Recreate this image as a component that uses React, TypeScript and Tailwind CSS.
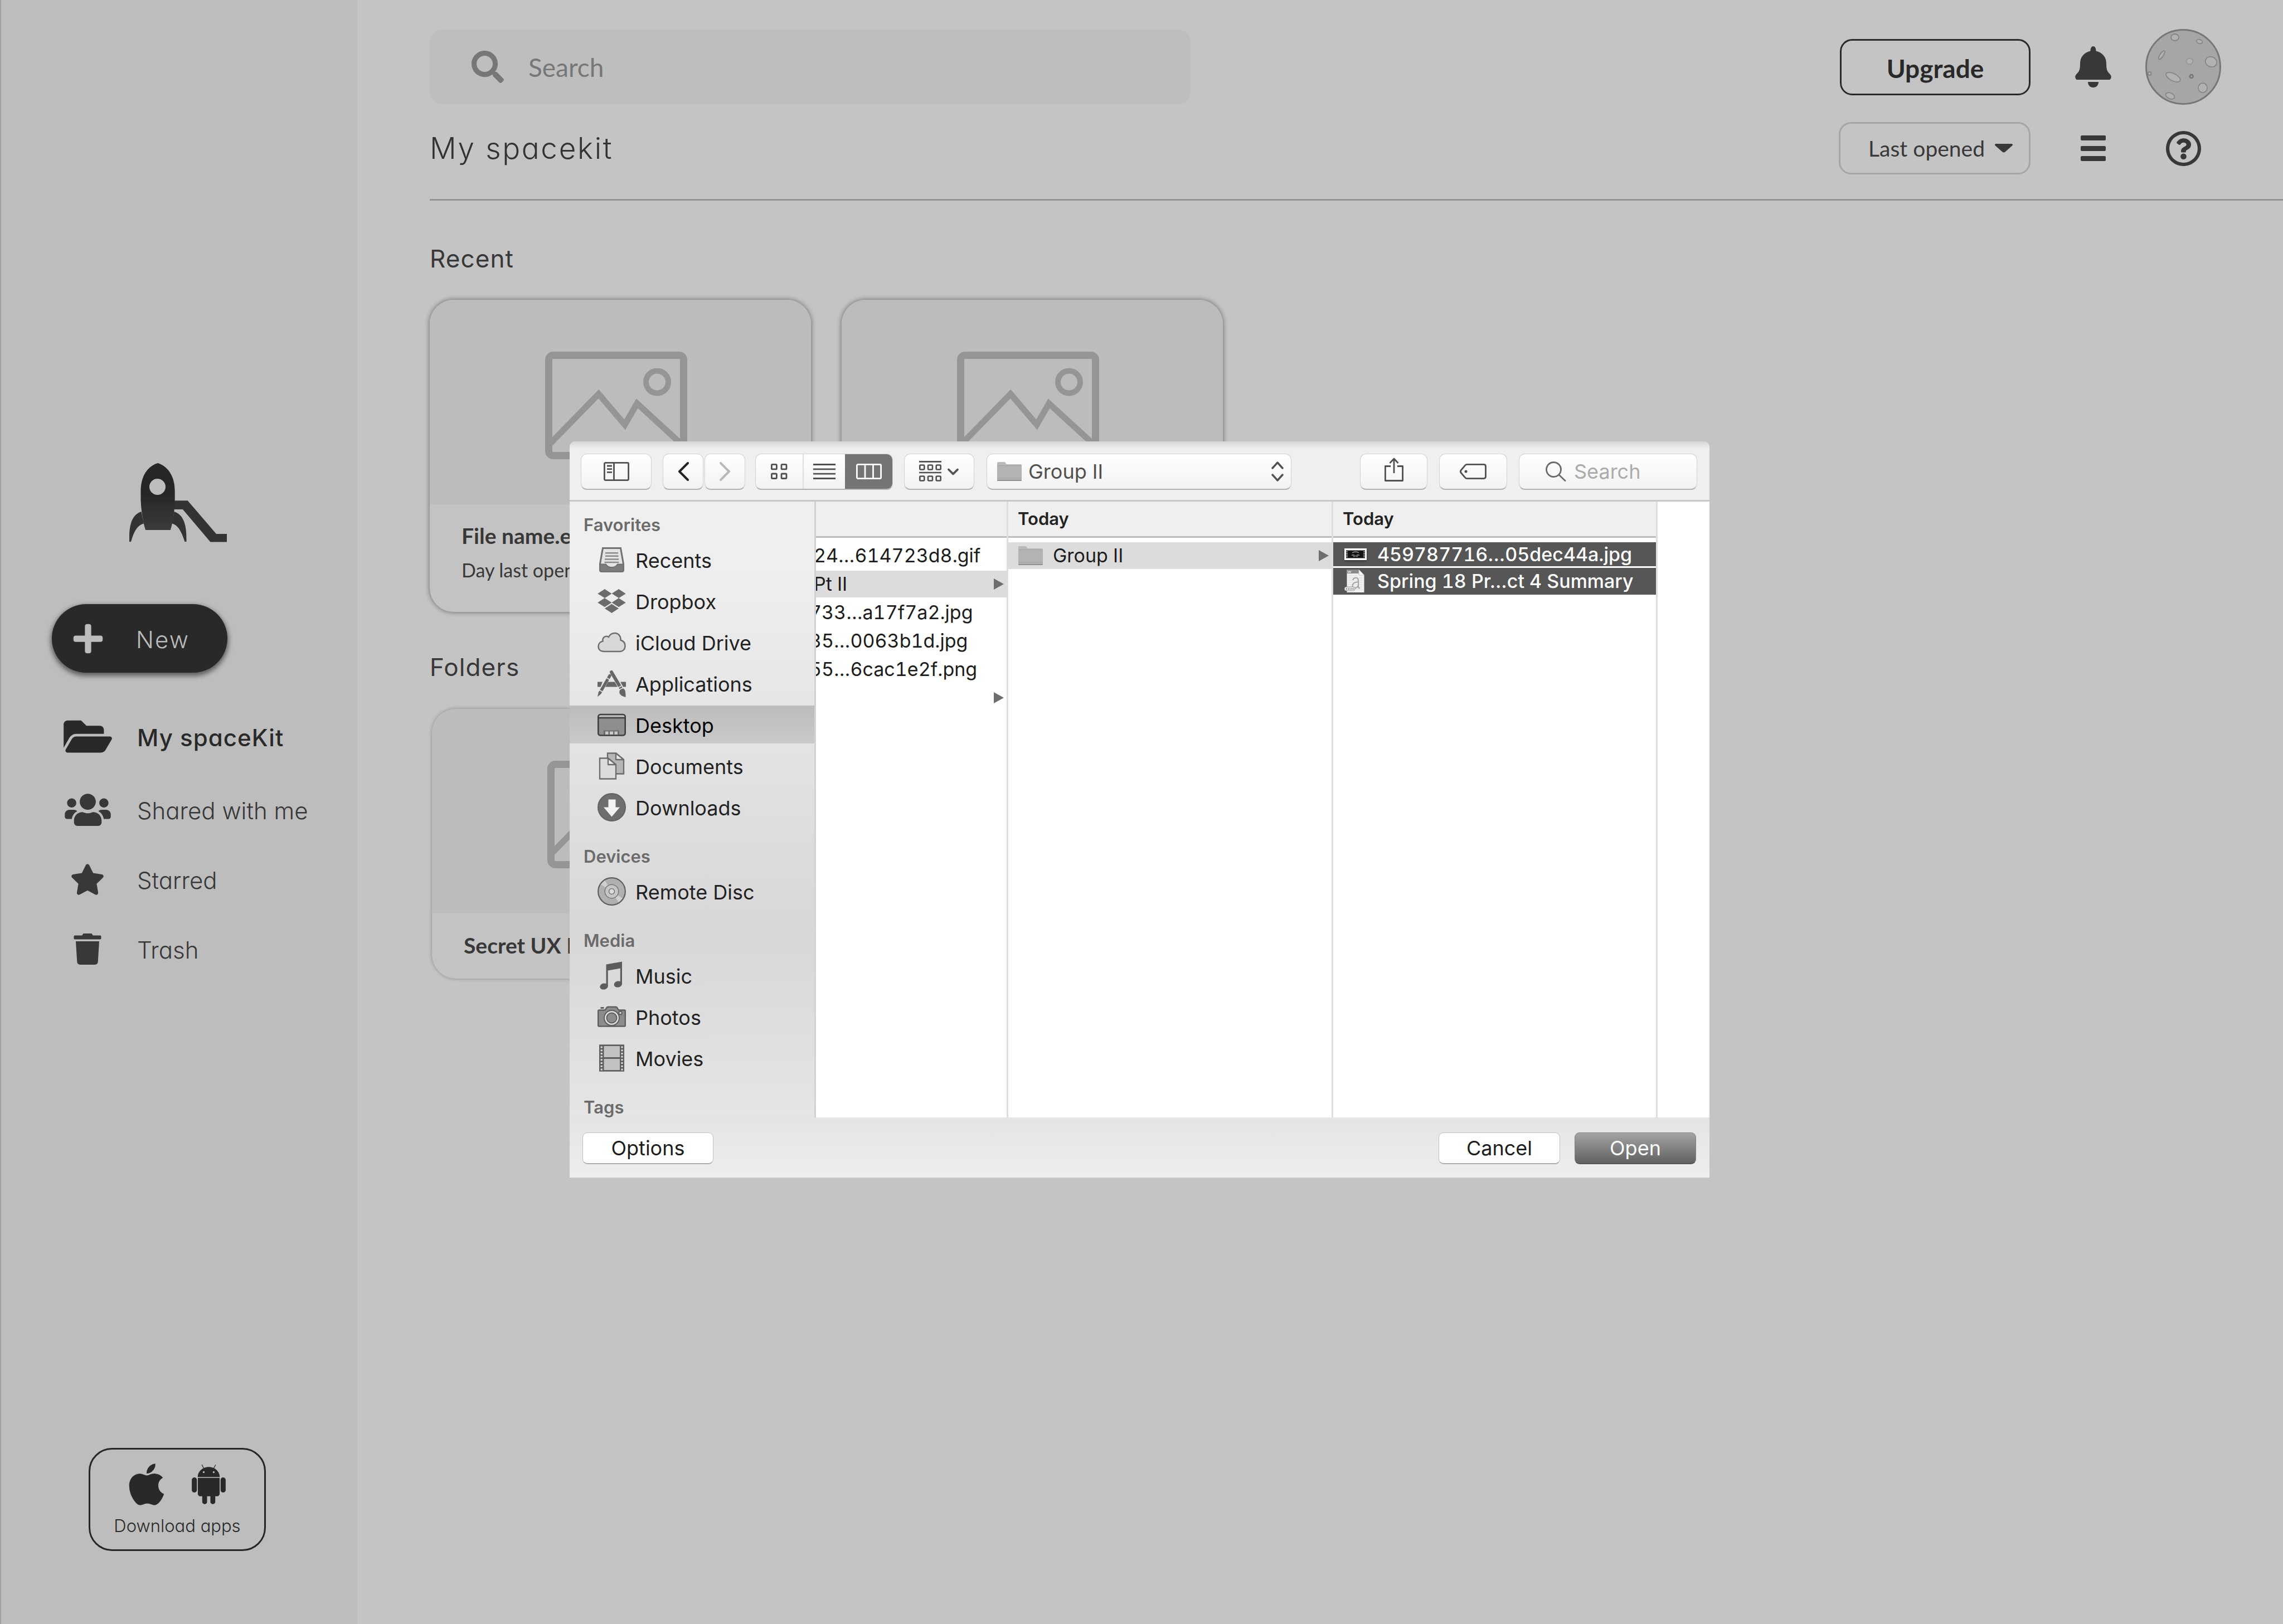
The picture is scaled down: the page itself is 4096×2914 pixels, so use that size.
import React from 'react';
import { FaApple, FaDropbox, FaFolderOpen, FaPlus, FaRegQuestionCircle, FaSearch, FaStar, FaTrash, FaUsers } from 'react-icons/fa';

/* ---------- Page icons ---------- */

function RocketLogo() {
  return (
    <svg viewBox="0 0 175 142" className="h-[142px] w-[175px]" role="img" aria-label="spaceKit">
      <defs>
        <linearGradient id="rocket" x1="0" y1="0" x2="0" y2="1">
          <stop offset="0.45" stopColor="#262626" />
          <stop offset="1" stopColor="#3b3b3b" />
        </linearGradient>
      </defs>
      <g fill="#333333">
        <path d="M21.5 87C6 92-1 108 0 141h3c5-17 11-30 23-32.500z" />
        <path d="M80.500 87c15.500 5 23 21 22 54h-3c-5.500-17-11.500-30-23-32.500z" />
        <path d="M81 67.300h23.700L156 127h19v14.500h-29.500L95.900 83H81z" />
      </g>
      <path
        fill="url(#rocket)"
        fillRule="evenodd"
        d="M51 0C34 5 20.500 22 20.500 50v16c.5 16 3.500 38 8.500 54h44.800c5.200-16 7.900-38 7.900-54V50C81.700 22 68 5 51 0zm-.5 28a14.500 14.500 0 1 1 0 29 14.500 14.500 0 0 1 0-29z"
      />
    </svg>
  );
}

function AndroidIcon() {
  return (
    <svg viewBox="0 0 448 512" className="h-[81px] w-[71px]" fill="currentColor" aria-hidden="true">
      <path d="M89.600 204.500v115.800c0 15.400-12.100 27.700-27.500 27.700-15.300 0-30.100-12.400-30.100-27.700V204.500c0-15.100 14.800-27.500 30.100-27.500 15.100 0 27.500 12.400 27.500 27.500zm10.800 157c0 16.400 13.200 29.600 29.600 29.600h19.900l.3 61.100c0 36.900 55.200 36.600 55.200 0v-61.100h37.200v61.100c0 36.700 55.500 36.800 55.500 0v-61.100h20.200c16.200 0 29.400-13.200 29.400-29.600V182.100H100.400v179.400zm248-189.100H99.300c0-42.800 25.600-80 63.600-99.400l-19.100-35.300c-2.800-4.900 4.300-8 6.700-3.800l19.400 35.600c34.900-15.500 75-14.700 108.300 0L297.500 34c2.500-4.300 9.500-1.100 6.700 3.800L285.100 73c37.700 19.400 63.300 56.600 63.300 99.400zm-170.700-55.500c0-5.700-4.600-10.500-10.500-10.500-5.700 0-10.200 4.800-10.200 10.500s4.600 10.500 10.200 10.500c5.900 0 10.500-4.800 10.500-10.500zm113.400 0c0-5.700-4.600-10.500-10.200-10.500-5.900 0-10.500 4.800-10.500 10.500s4.600 10.500 10.500 10.500c5.600 0 10.200-4.800 10.200-10.500zm94.800 60.100c-15.100 0-27.500 12.100-27.500 27.500v115.800c0 15.400 12.400 27.700 27.500 27.700 15.400 0 30.100-12.400 30.100-27.700V204.500c0-15.400-14.800-27.500-30.100-27.500z" />
    </svg>
  );
}

function BellIcon() {
  return (
    <svg viewBox="0 0 65 74" className="h-[74px] w-[65px]" fill="#383838" aria-hidden="true">
      <path d="M32.500 0C29.500 0 27.500 3 27.500 8.500 16 11.500 9 19 9 31c0 13-2.500 14.500-6.500 19-3.300 3.500-2.700 7.500 0 10h60c2.700-2.500 3.300-6.500 0-10-4-4.500-6.500-6-6.500-19 0-12-7-19.500-18.500-22.500C37.500 3 35.500 0 32.500 0z" />
      <path d="M23 64h19c0 6-4 10-9.500 10S23 70 23 64z" />
    </svg>
  );
}

function MoonAvatar() {
  return (
    <svg viewBox="0 0 136 136" className="size-[136px]" aria-hidden="true">
      <circle cx="68" cy="68" r="66.500" fill="#a6a6a6" stroke="#777777" strokeWidth="3" />
      <g fill="#b2b2b2" stroke="#858585" strokeWidth="1.800">
        <ellipse cx="53" cy="15" rx="7" ry="6" />
        <ellipse cx="97" cy="22.500" rx="5.500" ry="3.500" transform="rotate(20 97 22.500)" />
        <ellipse cx="29.400" cy="46.700" rx="3" ry="9" transform="rotate(33 29.400 46.700)" />
        <ellipse cx="79.400" cy="58" rx="6" ry="5.500" stroke="#969696" />
        <ellipse cx="118" cy="59" rx="10.500" ry="9" transform="rotate(20 118 59)" />
        <circle cx="7.600" cy="80" r="3" />
        <ellipse cx="50" cy="86.500" rx="14" ry="6.500" transform="rotate(27 50 86.500)" />
        <circle cx="82.700" cy="85" r="3" stroke="#777777" strokeWidth="2.500" fill="#a0a0a0" />
        <ellipse cx="103" cy="105.700" rx="8" ry="8.500" />
        <ellipse cx="44.600" cy="120" rx="8.500" ry="5" transform="rotate(25 44.600 120)" />
      </g>
    </svg>
  );
}

function PicturePlaceholder() {
  return (
    <svg viewBox="0 0 255 193" className="h-[193px] w-[255px]" fill="none" stroke="#959595" aria-hidden="true">
      <rect x="6.500" y="6.500" width="242" height="180" rx="8" strokeWidth="13" />
      <circle cx="201" cy="54.500" r="20" strokeWidth="10" />
      <path d="M8 166l88-90 47 55 22-38 83 76" strokeWidth="11" />
    </svg>
  );
}

/* ---------- Dialog icons ---------- */

function FolderGlyph() {
  return (
    <svg viewBox="0 0 44 36" className="h-[36px] w-[44px] shrink-0" aria-hidden="true">
      <path d="M0 3q0-2 2-2h11q2 0 2.500 2l.8 2H42q2 0 2 2v8H0z" fill="#b9b9b9" />
      <rect x="0" y="7.500" width="44" height="27" rx="1.500" fill="#b3b3b3" />
      <path d="M0 7.500h44M0 30h44" stroke="#a0a0a0" strokeWidth="1" />
      <rect x="0" y="33" width="44" height="2" rx="1" fill="#909090" />
    </svg>
  );
}

function Chevron({ flip, className }: { flip?: boolean; className: string }) {
  return (
    <svg viewBox="0 0 20 34" className={className} fill="none" stroke="currentColor" strokeWidth="4" strokeLinecap="round" strokeLinejoin="round" aria-hidden="true">
      <path d={flip ? 'M2 2l15 15L2 32' : 'M18 2L3 17l15 15'} />
    </svg>
  );
}

function SidebarToggleIcon() {
  return (
    <svg viewBox="0 0 46 34" className="h-[34px] w-[46px]" fill="none" stroke="currentColor" strokeWidth="2.800" aria-hidden="true">
      <rect x="1.400" y="1.400" width="43.200" height="31.200" rx="2" />
      <path d="M18.500 1v32M6 7h9M6 12.700h9M6 18.400h9" />
    </svg>
  );
}

function GridIcon() {
  return (
    <svg viewBox="0 0 30 28" className="h-[28px] w-[30px]" fill="none" stroke="currentColor" strokeWidth="2.800" aria-hidden="true">
      <rect x="1.400" y="1.400" width="9" height="8.500" rx="1.500" />
      <rect x="19" y="1.400" width="9" height="8.500" rx="1.500" />
      <rect x="1.400" y="18" width="9" height="8.500" rx="1.500" />
      <rect x="19" y="18" width="9" height="8.500" rx="1.500" />
    </svg>
  );
}

function ListIcon() {
  return (
    <svg viewBox="0 0 40 28" className="h-[28px] w-[40px]" stroke="currentColor" strokeWidth="2.800" aria-hidden="true">
      <path d="M0 1.500h40M0 9.800h40M0 18.200h40M0 26.500h40" />
    </svg>
  );
}

function ColumnsIcon() {
  return (
    <svg viewBox="0 0 46 28" className="h-[28px] w-[46px]" fill="none" stroke="currentColor" strokeWidth="2.800" aria-hidden="true">
      <rect x="1.400" y="1.400" width="43.200" height="25.200" rx="2" />
      <path d="M16 1v26M30.500 1v26" />
    </svg>
  );
}

function ArrangeIcon() {
  return (
    <svg viewBox="0 0 72 37" className="h-[37px] w-[72px]" fill="none" stroke="currentColor" strokeWidth="2.600" aria-hidden="true">
      <path d="M0 1.400h40M0 21h40" />
      <g>
        <rect x="1.300" y="7.500" width="8" height="8" rx="1.500" />
        <rect x="16" y="7.500" width="8" height="8" rx="1.500" />
        <rect x="30.700" y="7.500" width="8" height="8" rx="1.500" />
        <rect x="1.300" y="27.500" width="8" height="8" rx="1.500" />
        <rect x="16" y="27.500" width="8" height="8" rx="1.500" />
        <rect x="30.700" y="27.500" width="8" height="8" rx="1.500" />
      </g>
      <path d="M53 15.500l8 8 8-8" strokeWidth="3.800" strokeLinecap="round" strokeLinejoin="round" />
    </svg>
  );
}

function UpDownIcon() {
  return (
    <svg viewBox="0 0 22 36" className="pointer-events-none h-[36px] w-[22px]" fill="none" stroke="currentColor" strokeWidth="3.400" strokeLinecap="round" strokeLinejoin="round" aria-hidden="true">
      <path d="M2 12l9-10 9 10M2 24l9 10 9-10" />
    </svg>
  );
}

function ShareIcon() {
  return (
    <svg viewBox="0 0 34 43" className="mb-[6px] h-[43px] w-[34px]" fill="none" stroke="currentColor" strokeWidth="2.800" strokeLinejoin="round" aria-hidden="true">
      <path d="M11 15.500H1.400v26h31.200v-26H23" />
      <path d="M17 28V2M9.500 10L17 2l7.500 8" />
    </svg>
  );
}

function TagIcon() {
  return (
    <svg viewBox="0 0 48 28" className="h-[28px] w-[48px]" fill="none" stroke="currentColor" strokeWidth="2.800" strokeLinejoin="round" aria-hidden="true">
      <path d="M13 1.400h30q3.500 0 3.500 3.500v18.200q0 3.500-3.500 3.500H13q-2 0-3.500-1.800L2 16q-1.200-2 0-4l7.500-8.800Q11 1.400 13 1.400z" />
      <circle cx="11" cy="14" r="2.500" fill="currentColor" stroke="none" />
    </svg>
  );
}

function MagnifierIcon() {
  return (
    <svg viewBox="0 0 37 36" className="h-[36px] w-[37px] shrink-0 text-[#6a6a6a]" fill="none" stroke="currentColor" strokeWidth="2.800" strokeLinecap="round" aria-hidden="true">
      <circle cx="14.500" cy="14.500" r="13" />
      <path d="M24 24l11 10.500" />
    </svg>
  );
}

function DisclosureArrow() {
  return (
    <svg viewBox="0 0 18 20" className="h-[20px] w-[18px] shrink-0" fill="#6e6e6e" aria-hidden="true">
      <path d="M0 0l18 10L0 20z" />
    </svg>
  );
}

function PlaceIcon({ children }: { children: React.ReactNode }) {
  return (
    <svg viewBox="0 0 51 51" className="size-[51px] shrink-0" aria-hidden="true">
      {children}
    </svg>
  );
}

const recentsIcon = (
  <PlaceIcon>
    <path d="M9.500 4.500h32L46.500 33v10.500q0 3-3 3h-36q-3 0-3-3V33z" fill="#e4e4e4" stroke="#707070" strokeWidth="3" />
    <path d="M4.500 33.500H15q3 5.500 10.500 5.500T36 33.500h10.500v10q0 3-3 3h-36q-3 0-3-3z" fill="#7c7c7c" stroke="#707070" strokeWidth="2" />
    <path d="M14 13.200h23M14 18.800h23.500M13 24.400h25M12.500 30h26" stroke="#8a8a8a" strokeWidth="2.500" />
  </PlaceIcon>
);

const cloudIcon = (
  <PlaceIcon>
    <path
      d="M12 42C5 42 1.500 38 1.500 33c0-5 3.500-8.500 8-9.500C8.500 17 14 12.500 20 16c2.500-5 7-7 11-7 6.500 0 11 5.500 10.500 12.500 5 1.500 8 5.500 8 10.500 0 6-4 10-9.500 10z"
      fill="#d8d8d8"
      stroke="#6e6e6e"
      strokeWidth="2.500"
    />
  </PlaceIcon>
);

const applicationsIcon = (
  <PlaceIcon>
    <path d="M0 22.500h9L5.500 31.500H0zM19 22.500h12l5 9H14zM41 22.500h10v9h-5z" fill="#666666" />
    <path d="M22 11.500L5 41" stroke="#666666" strokeWidth="5.500" strokeLinecap="round" />
    <path d="M2 40l5 3.500L0 49.500z" fill="#666666" />
    <path d="M25 5l16.500 28" stroke="#666666" strokeWidth="6" strokeLinecap="round" />
    <path d="M42 34q7-1 8 6 .5 4 .5 10-9-2-11-7-1-5 2.500-9z" fill="#666666" />
    <path d="M16 15l6.500 4M3 37l7 4M37 33l7-4M38.500 37l8-4.500" stroke="#e4e4e4" strokeWidth="1.500" />
  </PlaceIcon>
);

const desktopIcon = (
  <PlaceIcon>
    <rect x="1.300" y="7" width="48.400" height="37.500" rx="4" fill="#8e8e8e" />
    <path d="M1.300 13v-2q0-4 4-4h40.400q4 0 4 4v2z" fill="#bdbdbd" />
    <rect x="1.300" y="7" width="48.400" height="37.500" rx="4" fill="none" stroke="#3e3e3e" strokeWidth="2.600" />
    <path d="M1 13h49" stroke="#3e3e3e" strokeWidth="2.400" />
    <rect x="11" y="35.500" width="28" height="7.500" fill="#6e6e6e" />
    <path d="M14 37.500h5.500V43H14zM22 37.500h6V43h-6zM30.500 37.500H36V43h-5.500z" fill="#c8c8c8" />
  </PlaceIcon>
);

const documentsIcon = (
  <PlaceIcon>
    <path d="M18 2.500h15L47 14v25.500H18z" fill="#b6b6b6" stroke="#6b6b6b" strokeWidth="2.300" />
    <path d="M33 2.500V14h14z" fill="#e6e6e6" stroke="#6b6b6b" strokeWidth="2.300" strokeLinejoin="round" />
    <path d="M4 11.500h15L33 23v25.500H4z" fill="#dcdcdc" stroke="#6b6b6b" strokeWidth="2.300" />
    <path d="M19 11.500V23h14z" fill="#eaeaea" stroke="#6b6b6b" strokeWidth="2.300" strokeLinejoin="round" />
  </PlaceIcon>
);

const downloadsIcon = (
  <PlaceIcon>
    <circle cx="25.500" cy="25.500" r="24.500" fill="#6e6e6e" stroke="#636363" strokeWidth="2" />
    <path d="M19.500 11.500h13v14h7.500L25.500 42.500 11 25.500h8.500z" fill="#f2f2f2" />
  </PlaceIcon>
);

const discIcon = (
  <PlaceIcon>
    <circle cx="25.500" cy="25.500" r="24.500" fill="#b0b0b0" />
    <path d="M25.500 25.500L6 13l7-7.500zM25.500 25.500L45 38l-7 7.500z" fill="#d0d0d0" />
    <circle cx="25.500" cy="25.500" r="24.300" fill="none" stroke="#5e5e5e" strokeWidth="2.200" />
    <circle cx="25.500" cy="25.500" r="12.300" fill="#c6c6c6" stroke="#767676" strokeWidth="1.500" />
    <circle cx="25.500" cy="25.500" r="5" fill="#dadada" stroke="#767676" strokeWidth="1.500" />
  </PlaceIcon>
);

const musicIcon = (
  <PlaceIcon>
    <g fill="#5c5c5c">
      <path d="M15.500 5.500L44 .5v40h-3.200V12.500L18.700 16.500v28h-3.200z" />
      <ellipse cx="11.500" cy="45" rx="7.300" ry="5.500" transform="rotate(-12 11.500 45)" />
      <ellipse cx="36.800" cy="41" rx="7.300" ry="5.500" transform="rotate(-12 36.800 41)" />
    </g>
  </PlaceIcon>
);

const photosIcon = (
  <PlaceIcon>
    <path d="M5.500 8h6v3h-6z" fill="#5e5e5e" />
    <path d="M1.200 15q0-1.500 1.500-1.500H12q2 0 3-2l1-2q1-1.800 3-1.800h13.500q2 0 3 1.800l1 2q1 2 3 2h8.800q1.500 0 1.500 1.500v26q0 1.500-1.500 1.500H2.700q-1.500 0-1.500-1.500z" fill="#8c8c8c" stroke="#5e5e5e" strokeWidth="2.400" />
    <circle cx="25.500" cy="27.500" r="13.500" fill="#dedede" stroke="#5e5e5e" strokeWidth="2" />
    <circle cx="25.500" cy="27.500" r="9" fill="#8c8c8c" stroke="#5e5e5e" strokeWidth="2" />
    <circle cx="41" cy="18.500" r="2.800" fill="#dedede" stroke="#5e5e5e" strokeWidth="2" />
  </PlaceIcon>
);

const moviesIcon = (
  <PlaceIcon>
    <rect x="3" y="1.300" width="45" height="48.400" fill="#5e5e5e" />
    <path d="M11.500 4h28.500v20H11.500zM11.500 27h28.500v20H11.500z" fill="#c2c2c2" />
    <path d="M7.200 4.500v43M44 4.500v43" stroke="#dadada" strokeWidth="3.200" strokeDasharray="3 2.700" />
  </PlaceIcon>
);

const dropboxIcon = <FaDropbox className="h-[49px] w-[51px] shrink-0 text-[#6b6b6b]" aria-hidden="true" />;

/* ---------- Page ---------- */

const geometric = "font-['Inter',sans-serif] [font-feature-settings:'cv11']";

const navItems = [
  { label: 'My spaceKit', icon: <FaFolderOpen className="h-[77px] w-[87px]" />, row: 'mb-[6px] text-[#292929] font-medium tracking-wide' },
  { label: 'Shared with me', icon: <FaUsers className="h-[66px] w-[83px]" />, row: 'text-[#383838] font-light' },
  { label: 'Starred', icon: <FaStar className="h-[56px] w-[62px]" />, row: 'text-[#383838] font-light' },
  { label: 'Trash', icon: <FaTrash className="h-[56px] w-[50px]" />, row: 'text-[#383838] font-light' },
];

function Sidebar() {
  return (
    <aside className="flex w-[641px] shrink-0 flex-col border-l-2 border-[#a0a0a0] bg-[#bdbdbd] pt-[831px] pb-[131px]">
      <div className="pl-[230px]">
        <RocketLogo />
      </div>
      <button type="button" className={`mt-[111px] ml-[91px] flex h-[123px] w-[315px] items-center rounded-full bg-[#292929] pl-[35px] text-[42px] font-light tracking-wider text-[#bcbcbc] shadow-[0_4px_8px_2px_rgba(0,0,0,0.5)] ${geometric}`}>
        <FaPlus className="size-[60px]" aria-hidden="true" />
        <span className="ml-[56px] pt-[4px]">New</span>
      </button>
      <nav className={`mt-[52px] flex flex-col text-[42px] ${geometric}`}>
        {navItems.map((item) => (
          <a key={item.label} href="#" className={`flex h-[125px] items-center pl-[111px] ${item.row}`}>
            <span className="flex w-[88px] justify-center" aria-hidden="true">{item.icon}</span>
            <span className="ml-[45px] pt-[4px]">{item.label}</span>
          </a>
        ))}
      </nav>
      <a href="#" className={`mt-auto ml-[157px] flex h-[185px] w-[318px] flex-col items-center rounded-[42px] border-3 border-[#262626] pt-[20px] text-[#292929] ${geometric}`}>
        <span className="flex items-center gap-[44px] pl-[4px]">
          <FaApple className="h-[85px] w-[64px]" aria-hidden="true" />
          <AndroidIcon />
        </span>
        <span className="mt-[8px] text-[31px] leading-[48px] font-light">Download apps</span>
      </a>
    </aside>
  );
}

function Header() {
  return (
    <header className="border-b-3 border-[#949494] pt-[52px] pb-[44px] text-[#383838]">
      <div className="flex items-center pr-[111px]">
        <label className="flex h-[134px] w-[1365px] items-center rounded-[22px] bg-[#bebebe] pl-[75px] text-[#777777]">
          <FaSearch className="size-[58px] shrink-0" aria-hidden="true" />
          <input type="search" aria-label="Search" placeholder="Search" className="ml-[44px] min-w-0 flex-1 bg-transparent text-[46px] outline-none placeholder:text-[#777777]" />
        </label>
        <button type="button" className="ml-auto h-[101px] w-[342px] rounded-[22px] border-3 border-[#292929] pt-[4px] text-[46px] font-bold text-[#292929]">
          Upgrade
        </button>
        <button type="button" aria-label="Notifications" className="ml-[80px]">
          <BellIcon />
        </button>
        <button type="button" aria-label="Account" className="ml-[61px]">
          <MoonAvatar />
        </button>
      </div>
      <div className="mt-[31px] flex items-center pr-[146px]">
        <h1 className={`text-[53px] leading-[60px] font-light tracking-wider text-[#333333] ${geometric}`}>My spacekit</h1>
        <label className="ml-auto flex h-[94px] w-[344px] items-center rounded-[22px] border-3 border-[#a6a6a6] pr-[29px] pl-[50px]">
          <select aria-label="Sort by" className="min-w-0 flex-1 appearance-none bg-transparent text-[39px] outline-none">
            <option>Last opened</option>
          </select>
          <svg viewBox="0 0 32 16" className="pointer-events-none h-[16px] w-[32px]" fill="currentColor" aria-hidden="true">
            <path d="M2 0h28q3 .5 1.500 3L18.500 14.500q-2.500 2-5 0L.5 3Q-1 .5 2 0z" />
          </svg>
        </label>
        <button type="button" aria-label="List view" className="ml-[90px] flex h-[46px] w-[45px] flex-col justify-between">
          <span className="h-[9px] w-full rounded-xs bg-[#383838]" />
          <span className="h-[9px] w-full rounded-xs bg-[#383838]" />
          <span className="h-[9px] w-full rounded-xs bg-[#383838]" />
        </button>
        <button type="button" aria-label="Help" className="ml-[107px]">
          <FaRegQuestionCircle className="size-[65px]" />
        </button>
      </div>
    </header>
  );
}

function FileCard() {
  return (
    <article className="w-[684px] overflow-hidden rounded-[43px] bg-[#c3c3c3] pb-[55px] text-[#383838] shadow-[0_0_8px_1px_rgba(0,0,0,0.4)]">
      <div className="h-[367px] bg-[#bcbcbc] pt-[93px] pl-[207px]">
        <PicturePlaceholder />
      </div>
      <h3 className="mt-[32px] pl-[57px] text-[39px] leading-[48px] font-bold">File name.ext</h3>
      <p className="mt-[18px] pl-[57px] text-[34px] leading-[40px]">Day last opened</p>
    </article>
  );
}

function FolderCard() {
  return (
    <article className="ml-1 w-[684px] overflow-hidden rounded-[43px] bg-[#c3c3c3] pb-[36px] text-[#383838] shadow-[0_0_6px_rgba(0,0,0,0.3)]">
      <div className="h-[367px] bg-[#bcbcbc] pt-[93px] pl-[207px]">
        <PicturePlaceholder />
      </div>
      <h3 className="mt-[33px] pl-[57px] text-[39px] leading-[48px] font-bold">Secret UX Files</h3>
    </article>
  );
}

/* ---------- Open-file dialog ---------- */

const toolButton = 'flex h-[65px] items-center justify-center rounded-[11px] border border-[#d2d2d2] border-b-2 border-b-[#b2b2b2] bg-linear-to-b from-white to-[#f2f2f2] text-[#505050]';

function DialogToolbar() {
  return (
    <div className="flex h-[108px] items-center rounded-t-[10px] border-b-3 border-[#c8c8c8] bg-[#efefef] bg-linear-to-b from-[#d4d4d4] via-[#efefef] via-[12px] to-[#efefef] pt-[3px] pr-[22px] pl-[20px]">
      <button type="button" aria-label="Toggle sidebar" className={`w-[127px] ${toolButton}`}><SidebarToggleIcon /></button>
      <button type="button" aria-label="Back" className={`ml-[20px] w-[73px] ${toolButton}`}><Chevron className="h-[34px] w-[20px] text-[#222222]" /></button>
      <button type="button" aria-label="Forward" className={`ml-[2px] w-[73px] ${toolButton}`}><Chevron flip className="h-[34px] w-[20px] text-[#b8b8b8]" /></button>
      <div className={`ml-[18px] w-[247px] overflow-hidden ${toolButton}`}>
        <button type="button" aria-label="Icons" className="flex h-full w-[84px] items-center justify-center"><GridIcon /></button>
        <button type="button" aria-label="List" className="flex h-full w-[76px] items-center justify-center border-l-2 border-[#dedede]"><ListIcon /></button>
        <button type="button" aria-label="Columns" aria-pressed="true" className="flex h-[65px] flex-1 items-center justify-center bg-[#747474] text-white"><ColumnsIcon /></button>
      </div>
      <button type="button" aria-label="Arrange" className={`ml-[20px] w-[126px] ${toolButton}`}><ArrangeIcon /></button>
      <label className={`ml-[22px] w-[547px] pr-[13px] pl-[18px] ${toolButton}`}>
        <FolderGlyph />
        <select aria-label="Location" className="ml-[12px] min-w-0 flex-1 appearance-none bg-transparent text-[36px] outline-none">
          <option>Group II</option>
        </select>
        <UpDownIcon />
      </label>
      <button type="button" aria-label="Share" className={`ml-auto w-[121px] ${toolButton}`}><ShareIcon /></button>
      <button type="button" aria-label="Tags" className={`ml-[21px] w-[122px] ${toolButton}`}><TagIcon /></button>
      <label className={`ml-[21px] w-[320px] pl-[47px] ${toolButton}`}>
        <MagnifierIcon />
        <input type="search" aria-label="Search files" placeholder="Search" className="ml-[14px] min-w-0 flex-1 bg-transparent text-[36px] outline-none placeholder:text-[#ababab]" />
      </label>
    </div>
  );
}

const places = [
  {
    title: 'Favorites',
    items: [
      { label: 'Recents', icon: recentsIcon },
      { label: 'Dropbox', icon: dropboxIcon },
      { label: 'iCloud Drive', icon: cloudIcon },
      { label: 'Applications', icon: applicationsIcon },
      { label: 'Desktop', icon: desktopIcon, selected: true },
      { label: 'Documents', icon: documentsIcon },
      { label: 'Downloads', icon: downloadsIcon },
    ],
  },
  { title: 'Devices', items: [{ label: 'Remote Disc', icon: discIcon }] },
  {
    title: 'Media',
    items: [
      { label: 'Music', icon: musicIcon },
      { label: 'Photos', icon: photosIcon },
      { label: 'Movies', icon: moviesIcon },
    ],
  },
  { title: 'Tags', items: [] },
];

function PlacesList() {
  return (
    <nav className="flex h-[1105px] w-[442px] shrink-0 flex-col gap-[35px] overflow-hidden border-r-3 border-[#d2d2d2] bg-linear-to-b from-[#efefef] from-10% via-[#d7d7d7] via-70% to-[#e5e5e5] pt-[22px]">
      {places.map((section) => (
        <section key={section.title} className="shrink-0">
          <h2 className="pl-[25px] text-[31px] leading-[40px] font-semibold text-[#6b6b6b]">{section.title}</h2>
          {section.items.length > 0 && (
            <ul className="mt-[8px] flex flex-col gap-[6px]">
              {section.items.map((item) => (
                <li key={item.label}>
                  <button
                    type="button"
                    className={
                      'selected' in item && item.selected
                        ? 'flex h-[68px] w-full items-center bg-linear-to-b from-[#bcbcbc] to-[#c9c9c9] pl-[50px] text-[36px] text-[#000000]'
                        : 'flex h-[68px] w-full items-center pl-[50px] text-[36px] text-[#222222]'
                    }
                  >
                    {item.icon}
                    <span className="ml-[17px] pt-[3px]">{item.label}</span>
                  </button>
                </li>
              ))}
            </ul>
          )}
        </section>
      ))}
    </nav>
  );
}

function ColumnHeading({ children }: { children?: React.ReactNode }) {
  return (
    <h2 className="h-[65px] border-b-3 border-[#bdbdbd] bg-[#efefef] pl-[17px] text-[31px] leading-[62px] font-semibold text-[#222222]">{children}</h2>
  );
}

const desktopFiles = [
  { name: '24…614723d8.gif', scroll: '-ml-[4px]' },
  { name: 'Pt II', scroll: '-ml-[4px]', folder: true, open: true },
  { name: '733…a17f7a2.jpg', scroll: '-ml-[12px]' },
  { name: '35…0063b1d.jpg', scroll: '-ml-[12px]' },
  { name: '55…6cac1e2f.png', scroll: '-ml-[12px]' },
  { name: '', scroll: '', folder: true },
];

function ImageThumb() {
  return (
    <svg viewBox="0 0 40 21" className="h-[21px] w-[40px] shrink-0 shadow-[0_2px_3px_rgba(0,0,0,0.4)]" aria-hidden="true">
      <rect width="40" height="21" fill="#ffffff" />
      <rect x="3" y="3.500" width="34" height="14" fill="#141414" />
      <path d="M4.500 5v11M35.500 5v11" stroke="#8a8a8a" strokeWidth="3" strokeDasharray="2 1" />
      <path d="M14 8q6-4 12 0M13 12h5M22 12h5M16 15q4-3 8 0" stroke="#9a9a9a" strokeWidth="1.500" fill="none" />
    </svg>
  );
}

function DocumentThumb() {
  return (
    <svg viewBox="0 0 40 42" className="h-[42px] w-[40px] shrink-0" aria-hidden="true">
      <path d="M4.500 0H26l9.500 10v31h-31z" fill="#f0f0f0" />
      <path d="M4.500 0H26v7H4.500z" fill="#8a8a8a" />
      <path d="M26 0v10h9.500z" fill="#ffffff" stroke="#b5b5b5" strokeWidth="0.800" />
      <path d="M7 11h17M7 15h25M7 19h25M7 23h25M7 27h25M7 31h25M7 35h25" stroke="#dadada" strokeWidth="1.200" />
      <path d="M6 2l1.500 4L9 2.500 10.500 6 12 2" stroke="#eeeeee" strokeWidth="1" fill="none" />
      <path d="M15 19q2-5 7-4 3 .8 3 5v10q0 4 3 3M25 22q-10 1-10.500 6.500.5 5.500 5.500 4.500 3.500-1 5-4" stroke="#a2a2a2" strokeWidth="2" fill="none" />
      <rect x="0" y="31" width="19" height="7" rx="3.500" fill="#e4e4e4" stroke="#8e8e8e" strokeWidth="0.800" />
      <path d="M4 33.500v2.500M8 33.500v2.500M12 33.500v2.500M15.500 33.500v2.500" stroke="#777777" strokeWidth="1.500" />
    </svg>
  );
}

function DialogColumns() {
  return (
    <div className="flex h-[1105px] min-w-0 flex-1 bg-white text-[34px] leading-[50px] text-[#1c1c1c] tabular-nums">
      <section className="w-[345px] overflow-hidden border-r-3 border-[#dedede]" aria-label="Desktop">
        <ColumnHeading />
        <ul className="mt-[8px] flex flex-col gap-[3px]">
          {desktopFiles.map((file) => (
            <li key={file.name} className={file.open ? 'flex h-[48px] items-center justify-between bg-[#dcdcdc] pr-[5px]' : 'flex h-[48px] items-center justify-between pr-[5px]'}>
              <span className={file.scroll}>{file.name}</span>
              {file.folder && <DisclosureArrow />}
            </li>
          ))}
        </ul>
      </section>
      <section className="w-[583px] border-r-3 border-[#dedede]" aria-label="Pt II">
        <ColumnHeading>Today</ColumnHeading>
        <ul className="mt-[8px]">
          <li className="flex h-[48px] items-center bg-[#dcdcdc] pr-[5px] pl-[18px]">
            <FolderGlyph />
            <span className="ml-[18px] flex-1">Group II</span>
            <DisclosureArrow />
          </li>
        </ul>
      </section>
      <section className="w-[582px] border-r-3 border-[#dedede]" aria-label="Group II">
        <ColumnHeading>Today</ColumnHeading>
        <ul className="mt-[8px] flex flex-col gap-[3px] font-medium text-white">
          <li className="flex h-[43px] items-center bg-[#565656] pl-[20px]">
            <ImageThumb />
            <span className="ml-[19px]">459787716…05dec44a.jpg</span>
          </li>
          <li className="flex h-[48px] items-center bg-[#565656] pl-[20px]">
            <DocumentThumb />
            <span className="ml-[19px]">Spring 18 Pr…ct 4 Summary</span>
          </li>
        </ul>
      </section>
    </div>
  );
}

function OpenFileDialog() {
  return (
    <div className="absolute inset-0 flex items-center justify-center pr-[7px] pb-[9px]">
      <div role="dialog" aria-label="Open file" className="flex w-[2045px] flex-col font-['Inter',sans-serif]">
        <DialogToolbar />
        <div className="flex">
          <PlacesList />
          <DialogColumns />
        </div>
        <footer className="flex h-[108px] items-center bg-linear-to-b from-[#e4e4e4] to-[#eeeeee] pt-[3px] pr-[24px] pl-[23px] text-[36px] text-[#1c1c1c]">
          <button type="button" className="h-[57px] w-[235px] rounded-[9px] border border-[#c0c0c0] border-b-2 border-b-[#adadad] bg-white leading-[54px]">Options</button>
          <button type="button" className="ml-auto h-[57px] w-[218px] rounded-[9px] border border-[#c0c0c0] border-b-2 border-b-[#adadad] bg-white leading-[54px]">Cancel</button>
          <button type="button" className="ml-[26px] h-[57px] w-[218px] rounded-[9px] border border-[#808080] border-b-2 border-b-[#565656] bg-linear-to-b from-[#a4a4a4] to-[#626262] leading-[54px] text-white">Open</button>
        </footer>
      </div>
    </div>
  );
}

export default function App() {
  return (
    <div className="relative flex min-h-screen bg-[#c4c4c4] font-['Lato',sans-serif]">
      <Sidebar />
      <main className="min-w-0 flex-1 pl-[130px]">
        <Header />
        <section>
          <h2 className={`mt-[74px] text-[44px] leading-[60px] tracking-wide text-[#383838] ${geometric}`}>Recent</h2>
          <div className="mt-[44px] flex gap-[55px]">
            <FileCard />
            <FileCard />
          </div>
        </section>
        <section>
          <h2 className={`mt-[69px] mb-[45px] text-[44px] leading-[60px] tracking-wide text-[#383838] ${geometric}`}>Folders</h2>
          <FolderCard />
        </section>
      </main>
      <OpenFileDialog />
    </div>
  );
}
